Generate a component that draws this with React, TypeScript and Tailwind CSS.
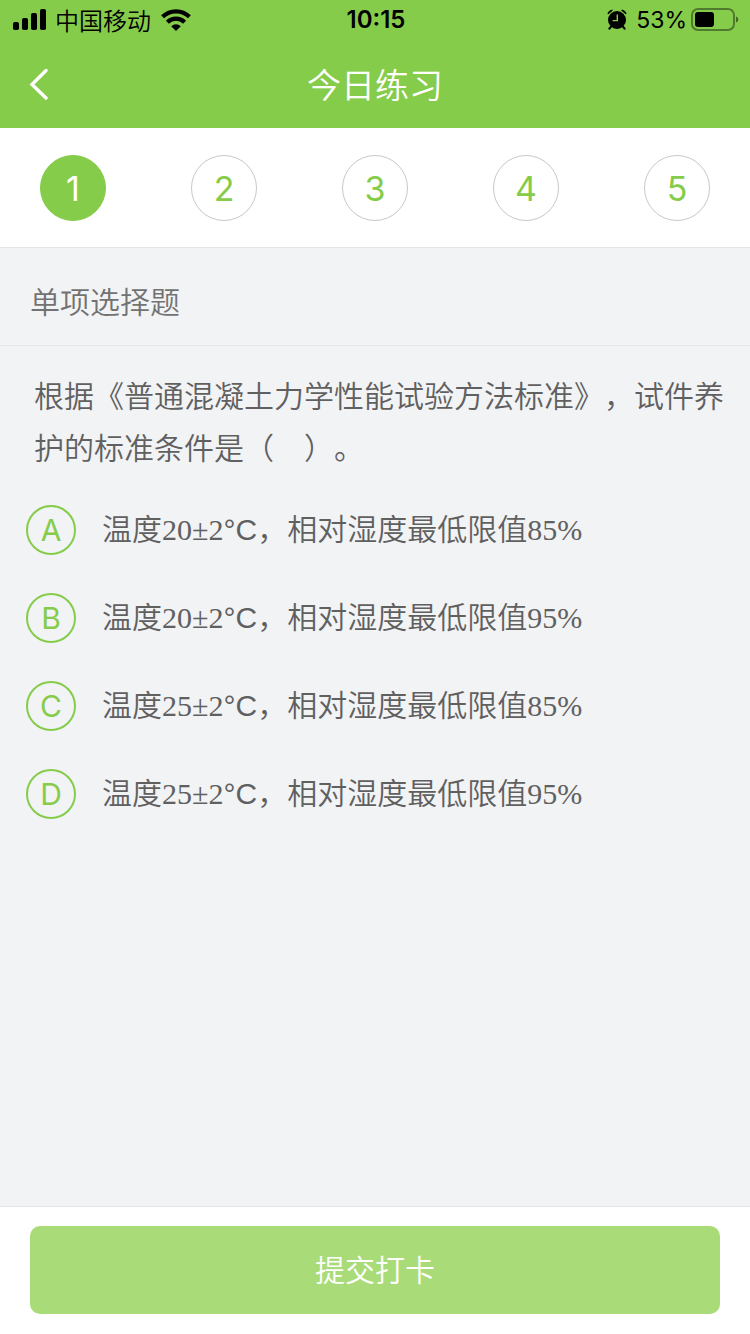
import React, { useState } from 'react';

interface Option {
  key: string;
  temperature: string;
  humidity: string;
}

const QUESTIONS = [1, 2, 3, 4, 5];

const OPTIONS: Option[] = [
  { key: 'A', temperature: '20±2', humidity: '85%' },
  { key: 'B', temperature: '20±2', humidity: '95%' },
  { key: 'C', temperature: '25±2', humidity: '85%' },
  { key: 'D', temperature: '25±2', humidity: '95%' },
];

const SignalIcon = () => (
  <svg width="34" height="22" viewBox="0 0 34 22" fill="currentColor" aria-hidden="true">
    <rect x="0" y="13" width="6" height="8" rx="1.8" />
    <rect x="9" y="9" width="6" height="12" rx="1.8" />
    <rect x="18" y="4" width="6" height="17" rx="1.8" />
    <rect x="27" y="0" width="6" height="21" rx="1.8" />
  </svg>
);

const WifiIcon = () => (
  <svg width="30" height="22" viewBox="0 0 30 22" aria-hidden="true">
    <g fill="none" stroke="currentColor" strokeWidth="4.2">
      <path d="M1.6 7.8a19.2 19.2 0 0 1 26.8 0" />
      <path d="M6.4 13.2a12.2 12.2 0 0 1 17.2 0" />
    </g>
    <path d="M10.2 17.2a7 7 0 0 1 9.6 0L15 22z" fill="currentColor" />
  </svg>
);

const AlarmIcon = () => (
  <svg width="20" height="22" viewBox="0 0 20 22" aria-hidden="true">
    <circle cx="10" cy="11" r="9" fill="currentColor" />
    <path d="M1 5A4 4 0 0 1 5.4 1.3zM19 5A4 4 0 0 0 14.6 1.3z" fill="currentColor" stroke="currentColor" strokeLinejoin="round" />
    <path d="M4.2 17.4L2.4 19.6M15.8 17.4l1.8 2.2" fill="none" stroke="currentColor" strokeWidth="2.2" strokeLinecap="round" />
    <path d="M10.3 5.6v6H5.6" fill="none" stroke="#86cc4b" strokeWidth="1.4" />
  </svg>
);

const BatteryIcon = () => (
  <svg width="48" height="24" viewBox="0 0 48 24" aria-hidden="true">
    <rect x="1" y="1" width="42" height="21" rx="6" fill="none" stroke="#000" strokeOpacity="0.4" strokeWidth="2" />
    <rect x="4" y="4" width="19" height="15" rx="3" fill="#000" />
    <path d="M45 8.5c3 1 3 5 0 6z" fill="#000" fillOpacity="0.5" />
  </svg>
);

const StatusBar = () => (
  <div className="grid h-10 grid-cols-3 items-center pl-[13px] pr-[11px] text-black">
    <div className="flex items-center">
      <SignalIcon />
      <span className="mr-[10px] ml-2 text-2xl leading-10">中国移动</span>
      <WifiIcon />
    </div>
    <div className="text-center font-['Inter',sans-serif] text-2xl font-semibold">10:15</div>
    <div className="flex items-center justify-end">
      <AlarmIcon />
      <span className="ml-[9px] mr-1 font-['Inter',sans-serif] text-[23px] font-normal">53%</span>
      <BatteryIcon />
    </div>
  </div>
);

export default function App() {
  const [current, setCurrent] = useState(1);
  const [answer, setAnswer] = useState<string | null>(null);

  return (
    <div className="flex min-h-screen flex-col bg-[#f2f3f5] font-['Noto_Sans_CJK_SC',sans-serif] font-[350] [text-spacing-trim:space-all]" lang="zh-CN">
      <header className="bg-[#86cc4b]">
        <StatusBar />
        {/* Title bar, the empty last column keeps the title centered */}
        <div className="grid h-[88px] grid-cols-[80px_1fr_80px] items-center text-white">
          <button type="button" aria-label="返回" className="flex h-full items-center pl-7">
            <svg width="22" height="32" viewBox="0 0 22 32" fill="none" stroke="currentColor" strokeWidth="3.4" strokeLinecap="round" aria-hidden="true">
              <path d="M18 2.5L4 16.5L18 30" />
            </svg>
          </button>
          <h1 className="pb-[2px] text-center text-[34px] font-[350]">今日练习</h1>
        </div>
      </header>

      {/* Question numbers */}
      <nav className="flex justify-between border-b border-[#e5e5e5] bg-white px-10 pt-[27px] pb-[26px]">
        {QUESTIONS.map((n) => (
          <button
            key={n}
            type="button"
            onClick={() => setCurrent(n)}
            className={`flex size-[66px] items-center justify-center rounded-full border font-['Inter',sans-serif] text-[34px] font-normal ${
              n === current ? 'border-[#86cc4b] bg-[#86cc4b] text-white' : 'border-[#c8c8c8] bg-white text-[#86cc4b]'
            }`}
          >
            {n}
          </button>
        ))}
      </nav>

      <main className="flex-1">
        <h2 className="border-b border-[#e6e7e9] px-[30px] pt-[30px] pb-[23px] text-[30px] leading-[44px] font-[350] text-[#727272]">
          单项选择题
        </h2>

        <section className="pt-[22px] pr-[26px] pl-[34px] text-[30px] text-[#606060]">
          <p id="question" className="leading-[52px]">
            根据《普通混凝土力学性能试验方法标准》，试件养护的标准条件是（{'\u3000'}）。
          </p>
          <div role="radiogroup" aria-labelledby="question" className="-ml-2 flex flex-col gap-[38px] pt-[33px]">
            {OPTIONS.map((option) => (
              <label key={option.key} className="flex cursor-pointer items-center gap-[26px]">
                <input
                  type="radio"
                  name="answer"
                  value={option.key}
                  checked={answer === option.key}
                  onChange={() => setAnswer(option.key)}
                  className="peer sr-only"
                />
                <span className="flex size-[50px] shrink-0 items-center justify-center rounded-full border-2 border-[#86cc4b] font-['Inter',sans-serif] text-[30px] font-normal text-[#86cc4b] peer-checked:bg-[#86cc4b] peer-checked:text-white">
                  {option.key}
                </span>
                <span className="font-['Liberation_Serif','Noto_Sans_CJK_SC',sans-serif] leading-[50px]">
                  温度{option.temperature}
                  <span className="font-['Liberation_Sans',sans-serif]">°C</span>
                  ，相对湿度最低限值{option.humidity}
                </span>
              </label>
            ))}
          </div>
        </section>
      </main>

      <footer className="border-t border-[#e5e5e5] bg-white px-[30px] pt-[19px] pb-5">
        <button type="button" className="h-[88px] w-full rounded-[10px] bg-[#a9dc79] pb-1 text-[30px] font-[350] text-white">
          提交打卡
        </button>
      </footer>
    </div>
  );
}
